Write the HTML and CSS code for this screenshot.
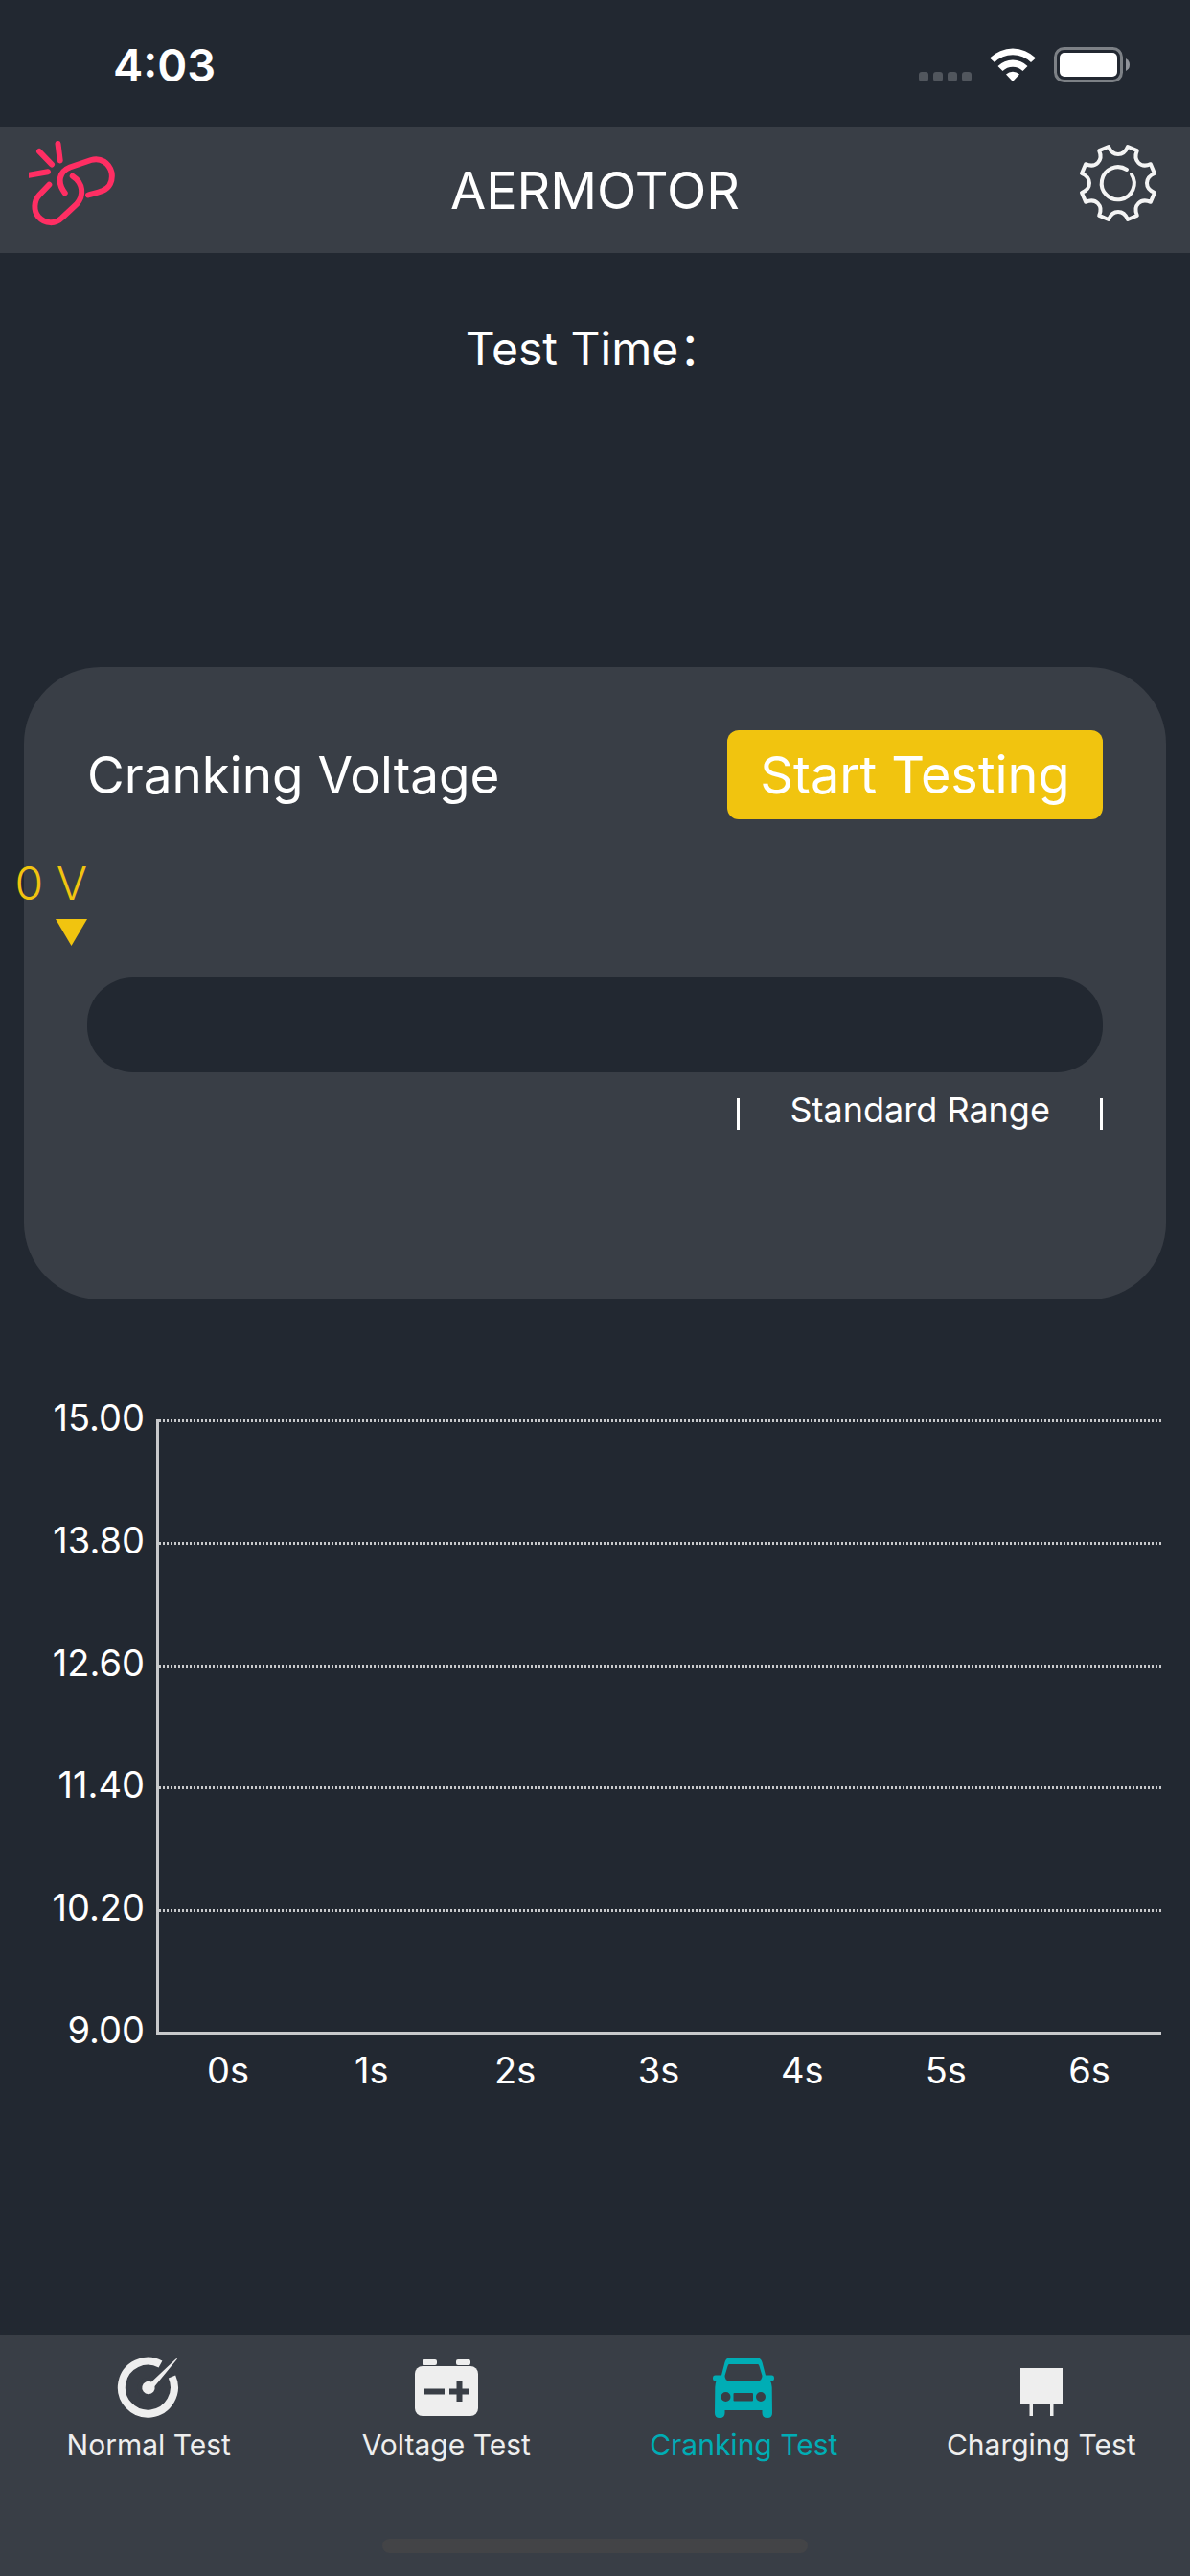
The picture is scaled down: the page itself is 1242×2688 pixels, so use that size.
FILE: index.html
```html
<!DOCTYPE html>
<html lang="en">
<head>
  <meta charset="utf-8">
  <meta name="viewport" content="width=device-width">
  <title>AERMOTOR</title>
  <link rel="stylesheet" href="styles.css">
</head>
<body>
  <div class="status-bar">
    <span class="clock">4:03</span>
    <span class="cell-dots"><i></i><i></i><i></i><i></i></span>
    <svg class="wifi" viewBox="0 0 48 37" aria-hidden="true">
      <path d="M0 11.500A34 34 0 0 1 48 11.500L43 16A27 27 0 0 0 5 16Z"/>
      <path d="M8.500 20A22 22 0 0 1 39.500 20L34.500 25A15 15 0 0 0 13.500 25Z"/>
      <path d="M17 28.500A10.500 10.500 0 0 1 31 28.500L24 36Z"/>
    </svg>
    <svg class="battery" viewBox="0 0 80 38" aria-hidden="true">
      <rect x="1.500" y="1.500" width="69" height="34" rx="9" fill="none" stroke="#7d8186" stroke-width="3"/>
      <rect x="6" y="6" width="60" height="25" rx="5" fill="#fff"/>
      <path d="M75 12q4 2 4 6.500t-4 6.500z" fill="#90939a"/>
    </svg>
  </div>

  <header class="app-bar">
    <button class="icon-button" aria-label="Connection">
      <svg viewBox="0 0 90 90" fill="none" stroke="#ff2e63" stroke-width="6" stroke-linecap="round">
        <path d="M11 11L24 24.500M30.500 3L32.700 20.500M0 35.700L20 32.300"/>
        <path d="M37.700 54.300C29 43 32 32 43 27.500L65 20C75 17 84 23 86.500 33C88 42 84 49 77 52C72 54 67 55 62 56.500"/>
        <path d="M21.300 45.700L11 56.500C5 63 5 73 10 79C17 87 28 87 35 80L50 66C58 57 57 44 45.700 36.700"/>
      </svg>
    </button>
    <h1 class="app-title">AERMOTOR</h1>
    <button class="icon-button" aria-label="Settings">
      <svg viewBox="-45 -44 90 90" fill="none" stroke="#f4f4f4" stroke-width="4" stroke-linecap="round" stroke-linejoin="round">
        <path d="M-10 -38C-8 -33 -4 -30 0 -30C4 -30 8 -33 10 -38L19.800 -33.900C17.700 -29 18.400 -24 21.200 -21.200C24 -18.400 29 -17.700 33.900 -19.800L38 -10C33 -8 30 -4 30 0C30 4 33 8 38 10L33.900 19.800C29 17.700 24 18.400 21.200 21.200C18.400 24 17.700 29 19.800 33.900L10 38C8 33 4 30 0 30C-4 30 -8 33 -10 38L-19.800 33.900C-17.700 29 -18.400 24 -21.200 21.200C-24 18.400 -29 17.700 -33.900 19.800L-38 10C-33 8 -30 4 -30 0C-30 -4 -33 -8 -38 -10L-33.900 -19.800C-29 -17.700 -24 -18.400 -21.200 -21.200C-18.400 -24 -17.700 -29 -19.800 -33.900Z"/>
        <path d="M9 -14A17 17 0 1 0 14 -9"/>
      </svg>
    </button>
  </header>

  <main class="content">
    <p class="test-time">Test Time：</p>

    <section class="card">
      <div class="card-head">
        <h2 class="card-title">Cranking Voltage</h2>
        <button class="start-button">Start Testing</button>
      </div>
      <div class="marker">
        <span class="marker-value">0 V</span>
        <svg class="marker-arrow" viewBox="0 0 33 28" aria-hidden="true"><path d="M0 0H33L16.500 28Z"/></svg>
      </div>
      <div class="gauge" role="meter" aria-label="Cranking Voltage" aria-valuemin="0" aria-valuemax="15" aria-valuenow="0"></div>
      <div class="range"><span>Standard Range</span></div>
    </section>

    <section class="chart" aria-label="Voltage over time">
      <div class="y-labels">
        <span>15.00</span><span>13.80</span><span>12.60</span><span>11.40</span><span>10.20</span><span>9.00</span>
      </div>
      <div class="plot"><i></i><i></i><i></i><i></i><i></i></div>
      <div class="x-labels">
        <span>0s</span><span>1s</span><span>2s</span><span>3s</span><span>4s</span><span>5s</span><span>6s</span>
      </div>
    </section>
  </main>

  <nav class="tab-bar">
    <div class="tabs">
      <a class="tab" href="#normal">
        <svg viewBox="0 0 66 66" aria-hidden="true">
          <path d="M45.500 8A27.500 27.500 0 1 0 57.500 21" fill="none" stroke="currentColor" stroke-width="8"/>
          <path d="M63.500 2L38.500 35A6.800 6.800 0 1 1 34.500 26.500Z" stroke="#393e46" stroke-width="8"/>
          <path d="M63 2.500L39.500 31A6.700 6.700 0 1 1 36 26.500L61 3Q63 1.500 63 2.500Z"/>
        </svg>
        Normal Test
      </a>
      <a class="tab" href="#voltage">
        <svg viewBox="0 0 66 66" aria-hidden="true">
          <rect x="8" y="3" width="15" height="6" rx="2"/>
          <rect x="43" y="3" width="15" height="6" rx="2"/>
          <rect y="10" width="66" height="52" rx="8"/>
          <path d="M10 36.500H31M36 36.500H57M46.500 26V47" stroke="#393e46" stroke-width="6"/>
        </svg>
        Voltage Test
      </a>
      <a class="tab tab-active" href="#cranking" aria-current="page">
        <svg viewBox="0 0 66 66" aria-hidden="true">
          <path fill-rule="evenodd" d="M19 1H46Q51 1 52.500 6L56 19.500H62.500Q65 19.500 65 22.500Q65 25.500 62.500 25.500H61Q62.500 28 62.700 32L63 59Q63 64 58 64Q52.500 64 52.500 59V56H13.500V59Q13.500 64 8 64Q3 64 3 59L3.300 32Q3.500 28 4.500 25.500H3.500Q1 25.500 1 22.500Q1 19.500 3.500 19.500H10L13.500 6Q15 1 19 1ZM18 8Q17 8 16.500 10L13.500 20Q13.500 25.500 19 25.500H47Q52.500 25.500 52.500 20L49.500 10Q49 8 48 8ZM14.500 37A5 5 0 1 0 14.500 47A5 5 0 1 0 14.500 37ZM51 37A5 5 0 1 0 51 47A5 5 0 1 0 51 37ZM23.500 38Q22.500 38 22.500 39V45.500Q22.500 46.500 23.500 46.500H42Q43 46.500 43 45.500V39Q43 38 42 38Z"/>
        </svg>
        Cranking Test
      </a>
      <a class="tab" href="#charging">
        <svg viewBox="0 0 66 66" aria-hidden="true">
          <path d="M11 12H55V50H45.500V62H42V50H24V62H20.500V50H11Z"/>
        </svg>
        Charging Test
      </a>
    </div>
    <div class="home-indicator"></div>
  </nav>
</body>
</html>
```
FILE: styles.css
```css
* {
  box-sizing: border-box;
}

body {
  display: flex;
  flex-direction: column;
  min-height: 100vh;
  margin: 0;
  background: #222831;
  color: #fff;
  font-family: Inter, "Noto Sans CJK SC", sans-serif;
  font-weight: 400;
}

h1,
h2,
p {
  margin: 0;
  font-weight: inherit;
}

button {
  padding: 0;
  border: 0;
  background: none;
  color: inherit;
  font: inherit;
}

/* Status bar */
.status-bar {
  display: flex;
  align-items: flex-start;
  height: 132px;
  padding: 49px 62px 0 118px;
}

.clock {
  margin-right: auto;
  font-size: 47px;
  font-weight: 600;
  line-height: 38px;
}

.cell-dots {
  display: flex;
  gap: 5px;
  margin: 26px 19px 0 0;
}

.cell-dots i {
  width: 10px;
  height: 10px;
  border-radius: 3px;
  background: #51565d;
}

.wifi {
  width: 48px;
  height: 37px;
  margin-right: 19px;
  fill: #fff;
}

.battery {
  width: 80px;
  height: 38px;
}

/* App bar */
.app-bar {
  display: grid;
  grid-template-columns: 90px 1fr 90px;
  align-items: center;
  height: 132px;
  padding: 0 30px;
  background: #393e46;
}

.app-title {
  font-size: 54px;
  text-align: center;
}

.icon-button {
  align-self: start;
  height: 90px;
  margin-top: 15px;
}

.icon-button svg {
  display: block;
}

/* Content */
.content {
  padding-top: 70px;
}

.test-time {
  font-size: 48px;
  line-height: 60px;
  text-align: center;
}

.card {
  margin: 302px 25px 0;
  padding: 66px 66px 177px;
  border-radius: 80px;
  background: #393e46;
}

.card-head {
  display: flex;
  align-items: center;
  justify-content: space-between;
}

.card-title {
  font-size: 53px;
}

.start-button {
  min-width: 392px;
  height: 93px;
  padding: 0 24px;
  border-radius: 12px;
  background: #f1c40f;
  font-size: 54px;
}

.marker {
  display: flex;
  flex-direction: column;
  align-items: flex-end;
  gap: 9px;
  width: 80px;
  margin: 39px 0 33px -80px;
  color: #f1c40f;
}

.marker-value {
  font-size: 48px;
  font-weight: 300;
  line-height: 56px;
}

.marker-arrow {
  width: 33px;
  height: 28px;
  fill: currentColor;
}

.gauge {
  height: 99px;
  border-radius: 48px;
  background: #222831;
}

.range {
  width: 36%;
  height: 33px;
  margin: 27px 0 0 auto;
  border: solid #fff;
  border-width: 0 3px;
  font-size: 36px;
  line-height: 24px;
  text-align: center;
}

/* Chart */
.chart {
  display: grid;
  grid-template-columns: 151px 1fr;
  column-gap: 12px;
  margin: 125px 30px 0 0;
  font-size: 38px;
}

.y-labels {
  display: flex;
  flex-direction: column;
  justify-content: space-between;
  margin: -22px 0 -15px;
  line-height: 40px;
  text-align: right;
}

.plot {
  display: flex;
  flex-direction: column;
  height: 642px;
  border: solid #c8c9cb;
  border-width: 0 0 3px 3px;
}

.plot i {
  flex: 1;
  background: repeating-linear-gradient(90deg, #c8c9cb 0 2px, transparent 2px 4px) top / 100% 3px no-repeat;
}

.x-labels {
  display: grid;
  grid-column: 2;
  grid-template-columns: repeat(7, 1fr);
  margin-top: 17px;
  line-height: 40px;
  text-align: center;
}

/* Tab bar */
.tab-bar {
  margin-top: auto;
  padding: 22px 0 24px;
  background: #393e46;
  color: #eee;
}

.tabs {
  display: grid;
  grid-template-columns: repeat(4, 1fr);
}

.tab {
  display: flex;
  flex-direction: column;
  align-items: center;
  gap: 8px;
  color: inherit;
  font-size: 30px;
  line-height: 36px;
  text-decoration: none;
}

.tab svg {
  width: 66px;
  height: 66px;
  fill: currentColor;
}

.tab-active {
  color: #00adb5;
}

.home-indicator {
  width: 444px;
  height: 15px;
  margin: 80px auto 0;
  border-radius: 8px;
  background: #434447;
}
```
